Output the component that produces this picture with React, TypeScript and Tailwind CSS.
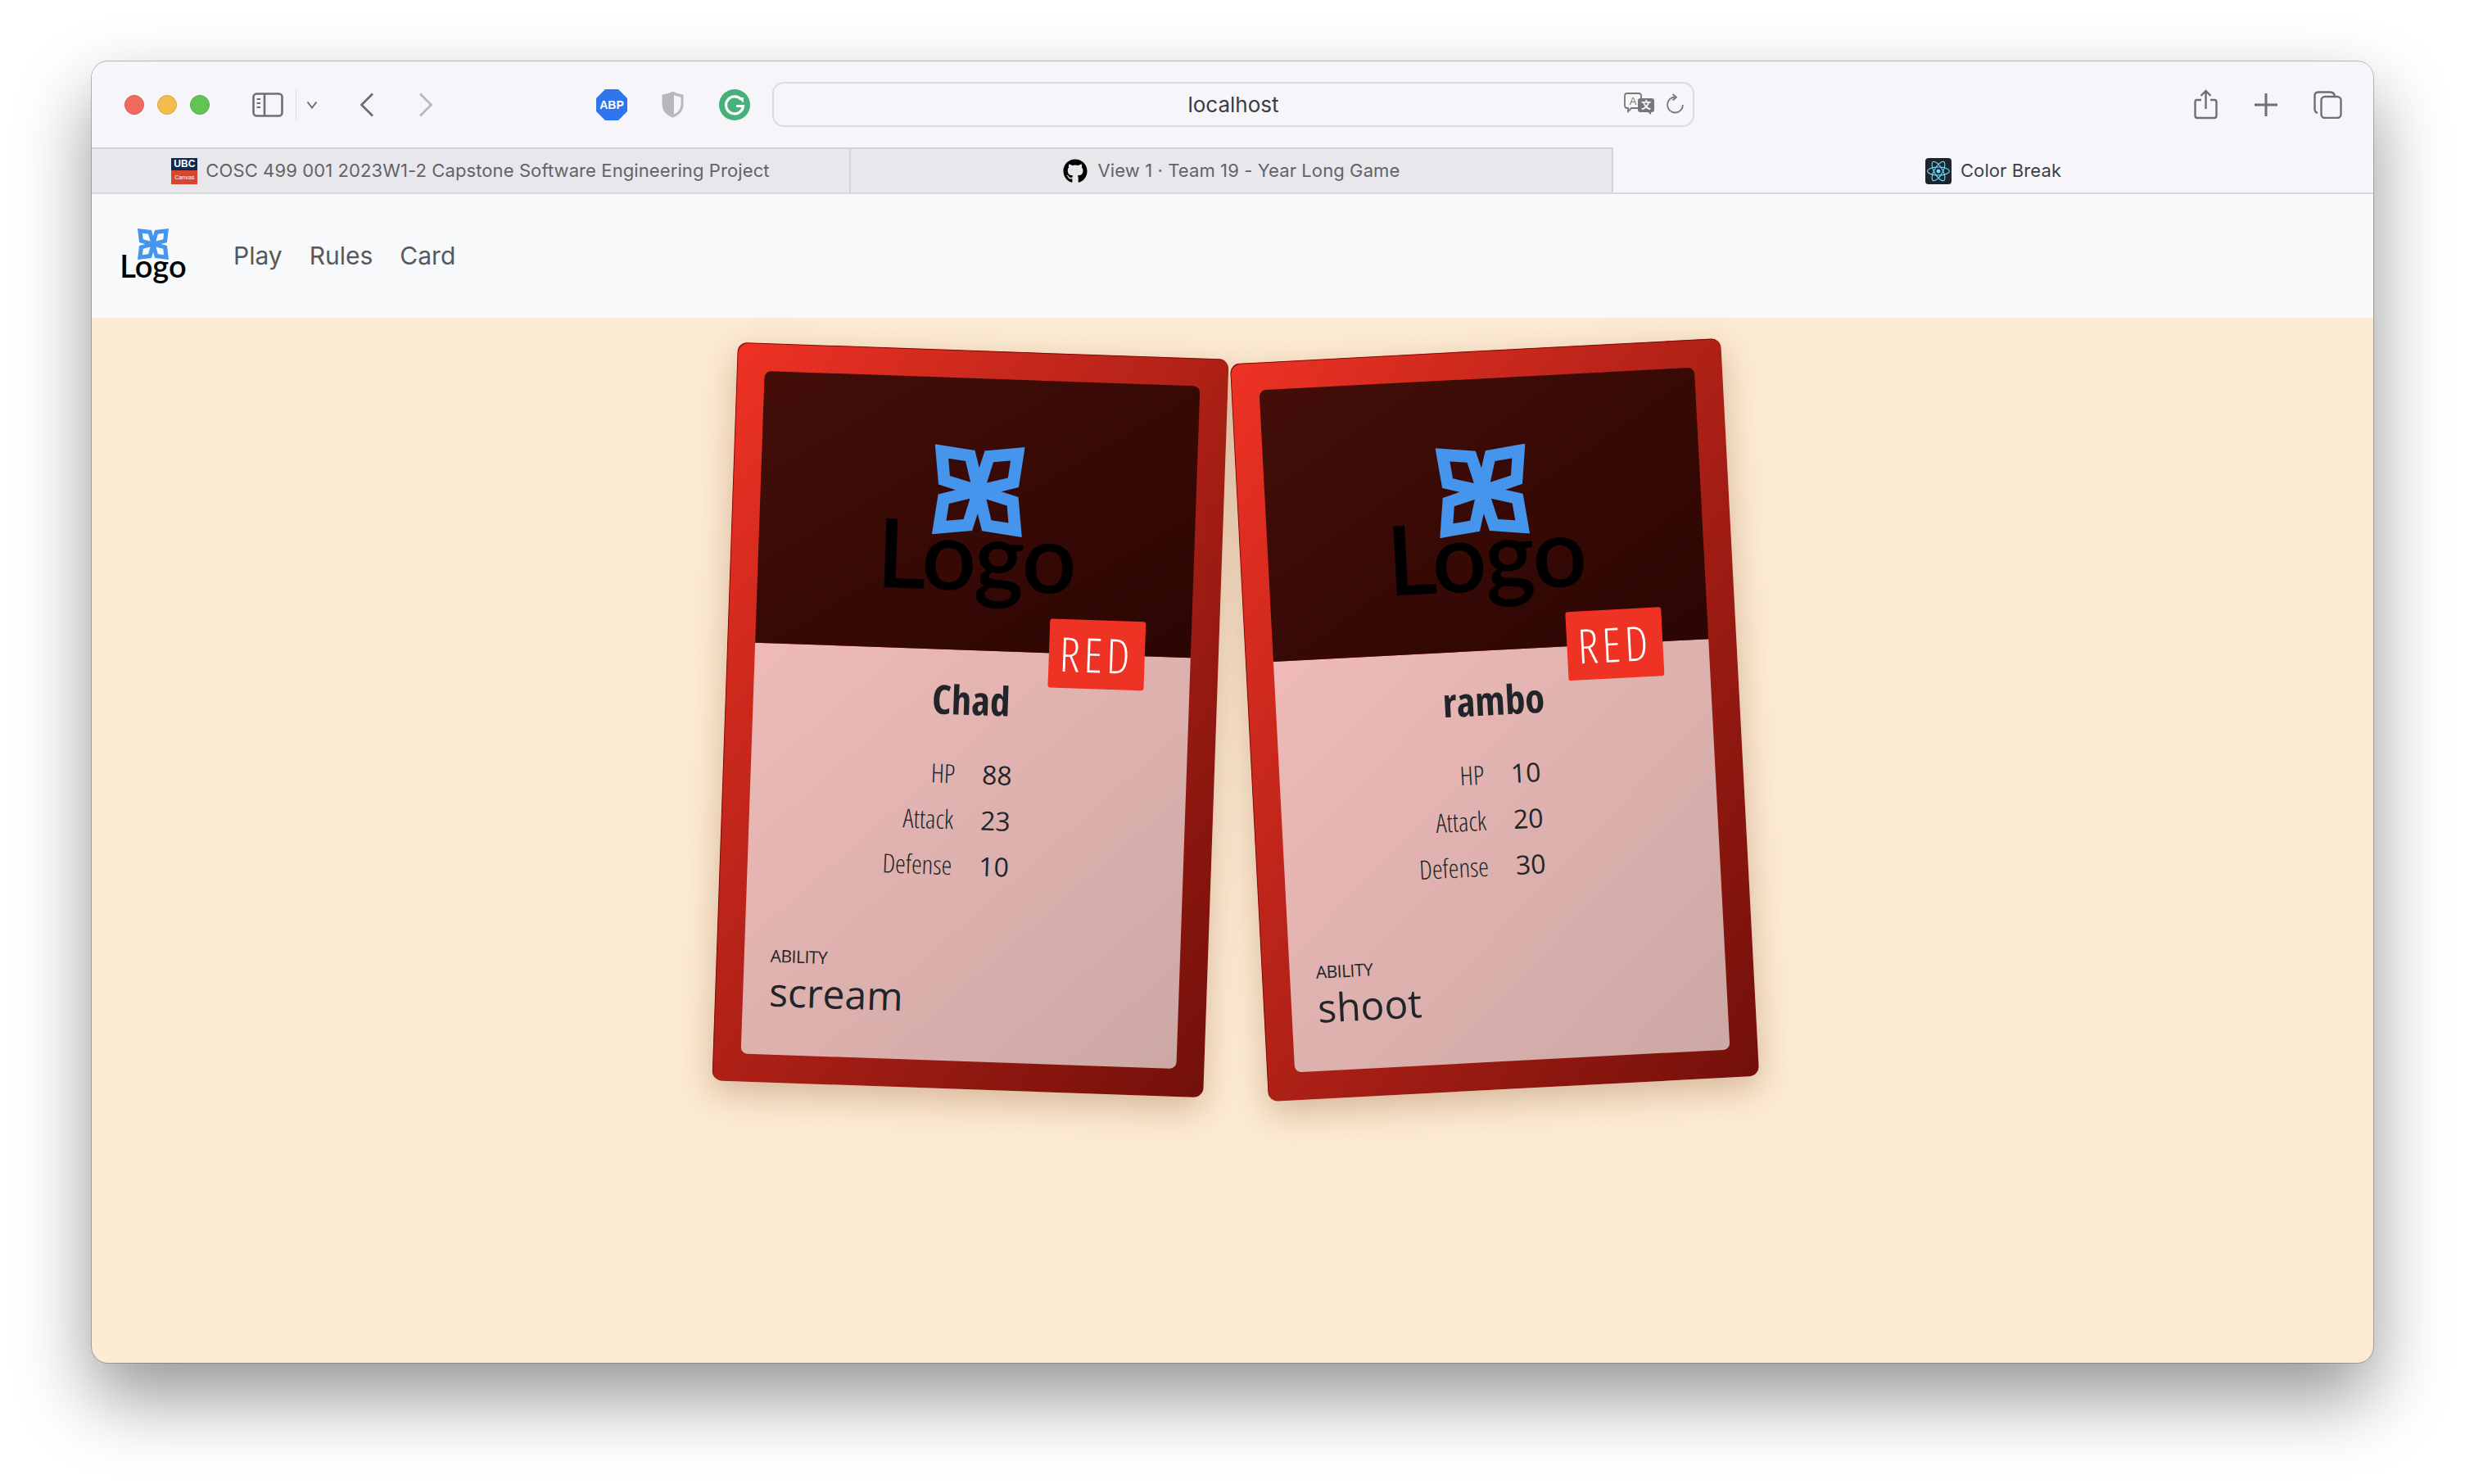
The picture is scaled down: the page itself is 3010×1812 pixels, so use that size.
import React from 'react';
import { FaGithub, FaReact } from 'react-icons/fa';

const uiFont = "font-['Inter','Liberation_Sans',sans-serif]";

const Flower = ({ className }: { className: string }) => (
  <svg viewBox="-55 -55 110 110" className={className}>
    <path
      fillRule="evenodd"
      fill="#4595ec"
      d="M-55 -55L-6 -49L0 -28L6 -49L55 -55L49 -6L28 0L49 6L55 55L6 49L0 28L-6 49L-55 55L-49 6L-28 0L-49 -6Z
         M-38 -38L-35.5 -17L-10 -10L-17 -35.5Z M38 -38L17 -35.5L10 -10L35.5 -17Z
         M38 38L35.5 17L10 10L17 35.5Z M-38 38L-17 35.5L-10 10L-35.5 17Z"
    />
  </svg>
);

const NavLogo = () => (
  <div className="flex flex-col items-center w-[78px] -mt-[4px]">
    <Flower className="w-[38px] h-[38px]" />
    <div className="font-['Lato',sans-serif] font-semibold text-[38px] leading-none tracking-[0px] text-black -mt-[12px]">
      Logo
    </div>
  </div>
);

const CardLogo = () => (
  <div className="flex flex-col items-center w-[240px]">
    <Flower className="w-[110px] h-[110px]" />
    <div className="font-['Lato',sans-serif] font-semibold text-[117px] leading-none tracking-[-2px] text-black -mt-[36px]">
      Logo
    </div>
  </div>
);

type CardProps = {
  name: string;
  hp: number;
  attack: number;
  defense: number;
  ability: string;
  tilt: string;
};

const GameCard = ({ name, hp, attack, defense, ability, tilt }: CardProps) => (
  <div
    className={`w-[600px] h-[902px] p-[34px] mx-5 rounded-xl bg-linear-to-br from-[#ee3224] to-[#73100a] shadow-[inset_1px_1px_0_rgba(110,10,5,0.9),0_14px_40px_rgba(120,50,10,0.28)] flex flex-col font-['Open_Sans',sans-serif] text-[#212529] ${tilt}`}
  >
    <div className="relative h-[332px] shrink-0 rounded-t-lg bg-linear-to-br from-[#440e09] to-[#2c0603] flex justify-center pt-[82px]">
      <CardLogo />
      <div className="absolute right-[56px] -bottom-[42px] w-[117px] h-[84px] rounded-[3px] bg-[#ee3224] text-white flex items-center justify-center text-[58px] leading-none font-light tracking-[5px] [font-stretch:75%]">
        RED
      </div>
    </div>
    <div className="flex-1 rounded-b-lg bg-linear-to-br from-[#efbab7] to-[#cca8a5] flex flex-col px-[32px] pt-[31px] pb-[48px]">
      <div className="text-center text-[49px] leading-[1.2] font-bold [font-stretch:75%]">{name}</div>
      <div className="grid grid-cols-2 gap-x-[33px] gap-y-2 mt-[37px] text-[32px] leading-[48px]">
        <div className="text-right font-light [font-stretch:75%]">HP</div>
        <div>{hp}</div>
        <div className="text-right font-light [font-stretch:75%]">Attack</div>
        <div>{attack}</div>
        <div className="text-right font-light [font-stretch:75%]">Defense</div>
        <div>{defense}</div>
      </div>
      <div className="mt-auto text-[21px] leading-[30px] tracking-[-0.5px]">ABILITY</div>
      <div className="text-[48px] leading-[58px]">{ability}</div>
    </div>
  </div>
);

const App = () => {
  return (
    <div className="w-[3010px] h-[1812px] overflow-hidden bg-white pt-[75px] pl-[112px]">
      <div className={`w-[2786px] h-[1589px] rounded-[20px] overflow-hidden flex flex-col bg-[#fcead2] shadow-[0_0_0_1px_rgba(90,90,90,0.4),0_42px_90px_rgba(0,0,0,0.42)] ${uiFont}`}>
        {/* toolbar */}
        <div className="h-[105px] shrink-0 bg-[#f6f6fa] flex items-center pl-[40px]">
          <div className="w-6 h-6 rounded-full bg-[#ee6a5f] border border-[#d9574d]" />
          <div className="w-6 h-6 rounded-full bg-[#f5bd4f] border border-[#dfa73c] ml-4" />
          <div className="w-6 h-6 rounded-full bg-[#61c454] border border-[#50ad44] ml-4" />

          <svg viewBox="0 0 38 30" className="w-[38px] h-[30px] ml-[52px]" fill="none" stroke="#6e6e73">
            <rect x="1.5" y="1.5" width="35" height="27" rx="4" strokeWidth="2.6" />
            <path d="M15 2V28" strokeWidth="2.6" />
            <path d="M5.5 8H10M5.5 13H10M5.5 18H10" strokeWidth="2" />
          </svg>
          <div className="w-px h-9 bg-[#dcdce0] ml-[15px]" />
          <svg viewBox="0 0 14 10" className="w-[14px] h-[10px] ml-[12px]" fill="none" stroke="#6e6e73" strokeWidth="2">
            <path d="M1.5 1.5L7 8.5L12.5 1.5" />
          </svg>
          <svg viewBox="0 0 18 30" className="w-[18px] h-[30px] ml-[51px]" fill="none" stroke="#6e6e73" strokeWidth="2.8">
            <path d="M16 1.5L2.5 15L16 28.5" />
          </svg>
          <svg viewBox="0 0 18 30" className="w-[18px] h-[30px] ml-[54px]" fill="none" stroke="#b9b9bd" strokeWidth="2.8">
            <path d="M2 1.5L15.5 15L2 28.5" />
          </svg>

          <svg viewBox="0 0 38 38" className="w-[38px] h-[38px] ml-[199px]">
            <path fill="#2f75ed" d="M11 0H27L38 11V27L27 38H11L0 27V11Z" />
            <text x="19" y="24" textAnchor="middle" fontSize="14" fontWeight="700" fill="#fff" fontFamily="Liberation Sans">ABP</text>
          </svg>
          <svg viewBox="0 0 27 33" className="w-[27px] h-[33px] ml-[42px]">
            <path fill="#b8b8bc" stroke="#b8b8bc" strokeWidth="2" d="M13.5 1.5C9 4 5 5 1.5 5.5V16C1.5 24 7 29 13.5 31.5C20 29 25.5 24 25.5 16V5.5C22 5 18 4 13.5 1.5Z" />
            <path fill="#f6f6fa" d="M15 5C18 6.3 21 7.2 23.5 7.5V16C23.5 22.5 19.5 26.5 15 28.7Z" />
          </svg>
          <svg viewBox="0 0 38 38" className="w-[38px] h-[38px] ml-[43px]">
            <circle cx="19" cy="19" r="19" fill="#48b07a" />
            <path fill="none" stroke="#fff" strokeWidth="3.2" d="M27 12.5A10.5 10.5 0 1 0 29.5 20.5H21" />
            <path fill="#fff" d="M23 10H30V16.5Z" />
          </svg>

          <div className="relative w-[1126px] h-[55px] ml-[27px] rounded-[14px] border-2 border-[#dcdce0] flex items-center justify-center text-[26px] text-[#3c3c40]">
            localhost
            <div className="absolute right-[10px] top-[11px] flex items-center gap-[14px]">
              <svg viewBox="0 0 38 28" className="w-[38px] h-[28px]">
                <path fill="#f6f6fa" stroke="#77777b" strokeWidth="1.8" d="M4 1H18Q21 1 21 4V16Q21 19 18 19H9L5 23V19H4Q1 19 1 16V4Q1 1 4 1Z" />
                <text x="11" y="15" textAnchor="middle" fontSize="13" fill="#77777b" fontFamily="Liberation Sans">A</text>
                <path fill="#77777b" d="M20 7H34Q37 7 37 10V21Q37 24 34 24H33V27L29 24H20Q17 24 17 21V10Q17 7 20 7Z" />
                <text x="27" y="20" textAnchor="middle" fontSize="12" fontWeight="700" fill="#fff" fontFamily="Noto Sans CJK SC">文</text>
              </svg>
              <svg viewBox="0 0 22 26" className="w-[22px] h-[26px]" fill="none" stroke="#77777b" strokeWidth="1.8">
                <path d="M10 4.5A9.5 9.5 0 1 0 20 14" />
                <path d="M7.5 1L12 4.7L7.5 8.5" />
              </svg>
            </div>
          </div>

          <svg viewBox="0 0 29 37" className="w-[29px] h-[37px] ml-[610px]" fill="none" stroke="#6e6e73" strokeWidth="2.4">
            <path d="M9 13H4Q1.5 13 1.5 15.500V32Q1.500 35 4 35H25Q27.500 35 27.500 32V15.500Q27.500 13 25 13H20" />
            <path d="M14.500 24V2M8.500 8L14.500 2L20.500 8" />
          </svg>
          <svg viewBox="0 0 28 28" className="w-[28px] h-[28px] ml-[45px]" fill="none" stroke="#6e6e73" strokeWidth="3">
            <path d="M14 0V28M0 14H28" />
          </svg>
          <svg viewBox="0 0 35 34" className="w-[35px] h-[34px] ml-[44px]" fill="none" stroke="#6e6e73" strokeWidth="2.4">
            <path d="M5 27Q1.500 26 1.500 22V6Q1.500 1.500 6 1.500H20Q25 1.500 26 6" />
            <rect x="9.500" y="7" width="24" height="26" rx="4.500" />
          </svg>
        </div>

        {/* tabs */}
        <div className="h-[57px] shrink-0 flex text-[22px] tracking-[0.1px] text-[#636367] border-b-2 border-[#d9d9dc]">
          <div className="w-[927px] bg-[#e8e8ec] border-t-2 border-r-2 border-t-[#d2d2d6] border-r-[#d5d5d9] flex items-center justify-center gap-[10px]">
            <div className="w-[32px] h-[32px] flex flex-col font-['Liberation_Sans',sans-serif] text-white text-center">
              <div className="h-[15px] bg-[#0f2a52] text-[12px] leading-[15px] font-bold">UBC</div>
              <div className="h-[17px] bg-[#d3472f] text-[7px] leading-[17px]">Canvas</div>
            </div>
            <span>COSC 499 001 2023W1-2 Capstone Software Engineering Project</span>
          </div>
          <div className="w-[931px] bg-[#e8e8ec] border-t-2 border-r-2 border-t-[#d2d2d6] border-r-[#d5d5d9] flex items-center justify-center gap-[13px]">
            <FaGithub className="w-[30px] h-[30px] text-black" />
            <span>View 1 · Team 19 - Year Long Game</span>
          </div>
          <div className="flex-1 flex items-center justify-center gap-[11px] text-[#3f3f43] bg-[#f6f6fa] pt-[2px]">
            <div className="w-[32px] h-[32px] rounded-[4px] bg-[#20232a] flex items-center justify-center">
              <FaReact className="w-[28px] h-[28px] text-[#61dafb]" />
            </div>
            <span>Color Break</span>
          </div>
        </div>

        {/* navbar */}
        <div className="h-[151px] shrink-0 bg-[#f8f9fa] flex items-center pl-[36px] text-[30px] text-[#57585a]">
          <NavLogo />
          <a className="ml-[59px]">Play</a>
          <a className="ml-[33px]">Rules</a>
          <a className="ml-[33px]">Card</a>
        </div>

        {/* cards */}
        <div className="flex-1 flex justify-center items-start pt-10">
          <GameCard name="Chad" hp={88} attack={23} defense={10} ability="scream" tilt="rotate-2" />
          <GameCard name="rambo" hp={10} attack={20} defense={30} ability="shoot" tilt="-rotate-3" />
        </div>
      </div>
    </div>
  );
};

export default App;
